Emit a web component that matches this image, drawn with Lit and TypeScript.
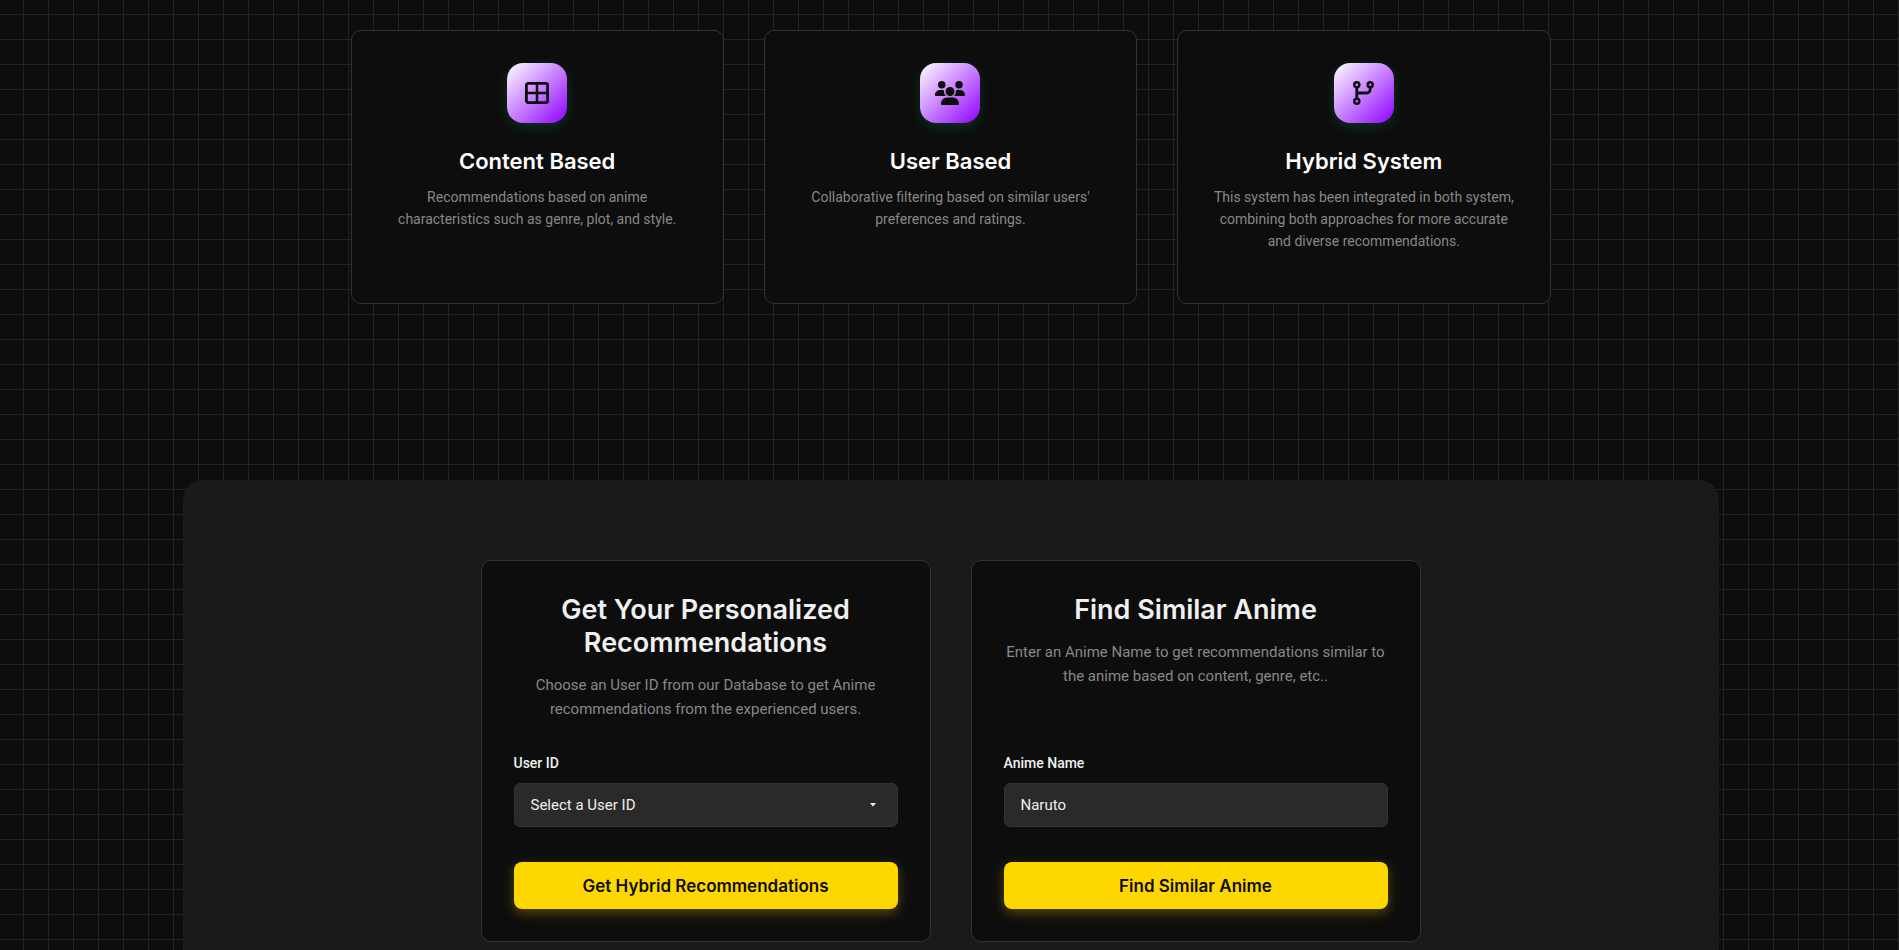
import { LitElement, html, css, svg } from "lit";
import { customElement, property } from "lit/decorators.js";

const icons: Record<string, unknown> = {
  table: svg`<svg width="24" height="22" viewBox="0 0 24 22" fill="none" stroke="currentColor" aria-hidden="true"><rect x="1.400" y="1.400" width="21.200" height="19.200" rx="1.800" stroke-width="2.800"/><path d="M12 1.500v19M1.500 11h21" stroke-width="2.500"/></svg>`,
  users: svg`<svg width="30" height="24" viewBox="0 0 640 512" fill="currentColor" aria-hidden="true"><path d="M144 0a80 80 0 1 1 0 160A80 80 0 1 1 144 0zM512 0a80 80 0 1 1 0 160A80 80 0 1 1 512 0zM0 298.700C0 239.800 47.800 192 106.700 192h42.700c15.900 0 31 3.500 44.600 9.700c-1.300 7.200-1.900 14.700-1.900 22.300c0 38.200 16.800 72.500 43.300 96c-.2 0-.4 0-.7 0H21.300C9.600 320 0 310.400 0 298.700zM405.300 320c-.2 0-.4 0-.7 0c26.600-23.500 43.300-57.800 43.300-96c0-7.600-.7-15-1.900-22.300c13.600-6.300 28.700-9.700 44.600-9.700h42.700C592.200 192 640 239.800 640 298.700c0 11.800-9.600 21.300-21.300 21.300H405.300zM224 224a96 96 0 1 1 192 0 96 96 0 1 1 -192 0zM128 485.300C128 411.700 187.700 352 261.300 352H378.700C452.300 352 512 411.700 512 485.300c0 14.700-11.900 26.700-26.700 26.700H154.700c-14.700 0-26.700-11.900-26.700-26.700z"/></svg>`,
  branch: svg`<svg width="21" height="24" viewBox="0 0 21 24" fill="none" stroke="currentColor" stroke-width="2.500" aria-hidden="true"><circle cx="3.800" cy="3.800" r="2.500"/><circle cx="17.200" cy="3.800" r="2.500"/><circle cx="3.800" cy="20.200" r="2.500"/><path d="M3.800 6v12M17.200 6v2.500a3.500 3.500 0 0 1-3.500 3.500H3.800" stroke-width="2.800"/></svg>`,
};

@customElement("feature-card")
class FeatureCard extends LitElement {
  @property() icon = "table";
  @property() heading = "";
  @property() text = "";

  static styles = css`
    :host {
      box-sizing: border-box;
      display: flex;
      flex-direction: column;
      align-items: center;
      padding: 32px 32px 51px;
      border: 1px solid #333;
      border-radius: 10px;
      background: #0d0d0d;
      text-align: center;
    }
    .badge {
      display: grid;
      place-items: center;
      width: 60px;
      height: 60px;
      border-radius: 16px;
      background: linear-gradient(135deg, #fff, #8f00ff);
      box-shadow: 0 4px 12px rgba(0, 255, 136, 0.15);
      color: #0d0d0d;
    }
    .title {
      margin: 24px 0 11px;
      color: #fff;
      font: 600 22px/28px Inter, sans-serif;
    }
    .text {
      margin: 0;
      color: #888;
      font-size: 14px;
      line-height: 22px;
    }
  `;

  render() {
    return html`
      <div class="badge">${icons[this.icon]}</div>
      <h3 class="title">${this.heading}</h3>
      <p class="text">${this.text}</p>
    `;
  }
}

@customElement("app-root")
class AppRoot extends LitElement {
  static styles = css`
    :host {
      box-sizing: border-box;
      display: block;
      height: 100vh;
      overflow: hidden;
      padding: 30px 0 0 2px;
      background-color: #0d0d0d;
      background-image: linear-gradient(to right, #242424 1px, transparent 1px),
        linear-gradient(to bottom, #242424 1px, transparent 1px);
      background-size: 25px 25px;
      background-position: 23px 14px;
      font-family: Roboto, sans-serif;
    }
    .features {
      display: grid;
      grid-template-columns: repeat(3, 1fr);
      gap: 40px;
      max-width: 1200px;
      margin: 0 auto;
    }
    .panel {
      box-sizing: border-box;
      max-width: 1536px;
      margin: 176px auto 0;
      padding: 80px 40px;
      border-radius: 20px;
      background: #1a1a1a;
    }
    .forms {
      display: grid;
      grid-template-columns: repeat(2, 1fr);
      gap: 40px;
      max-width: 940px;
      margin: 0 auto;
    }
    .form {
      display: flex;
      flex-direction: column;
      padding: 32px;
      border: 1px solid #333;
      border-radius: 10px;
      background: #0d0d0d;
    }
    .title {
      margin: 0 0 14px;
      color: #f0f0f0;
      font: 600 27px/33px Inter, sans-serif;
      text-align: center;
    }
    .text {
      margin: 0 0 32px;
      color: #888;
      font-size: 15px;
      line-height: 24px;
      text-align: center;
    }
    .label {
      margin: auto 0 10px;
      color: #f0f0f0;
      font-size: 14px;
      font-weight: 500;
      line-height: 20px;
    }
    .picker {
      display: grid;
      align-items: center;
    }
    .field,
    .arrow {
      grid-area: 1 / 1;
    }
    .field {
      box-sizing: border-box;
      width: 100%;
      height: 44px;
      margin: 0;
      padding: 0 16px;
      border: 1px solid #333;
      border-radius: 6px;
      outline: none;
      appearance: none;
      background: #2a2a2a;
      color: #f0f0f0;
      font: 15px/20px Roboto, sans-serif;
    }
    .arrow {
      justify-self: end;
      margin-right: 22px;
      color: #f0f0f0;
      pointer-events: none;
    }
    .button {
      height: 47px;
      margin-top: 35px;
      padding: 0 24px;
      border: 0;
      border-radius: 8px;
      background: #ffd700;
      box-shadow: 0 4px 12px rgba(255, 215, 0, 0.3);
      color: #0d0d0d;
      font: 600 17px/24px Inter, sans-serif;
      cursor: pointer;
    }
  `;

  render() {
    return html`
      <section class="features">
        <feature-card icon="table" heading="Content Based"
          text="Recommendations based on anime characteristics such as genre, plot, and style."></feature-card>
        <feature-card icon="users" heading="User Based"
          text="Collaborative filtering based on similar users' preferences and ratings."></feature-card>
        <feature-card icon="branch" heading="Hybrid System"
          text="This system has been integrated in both system, combining both approaches for more accurate and diverse recommendations."></feature-card>
      </section>
      <section class="panel">
        <div class="forms">
          <form class="form" @submit=${(e: Event) => e.preventDefault()}>
            <h2 class="title">Get Your Personalized Recommendations</h2>
            <p class="text">Choose an User ID from our Database to get Anime recommendations from the experienced users.</p>
            <label class="label" for="user-id">User ID</label>
            <div class="picker">
              <select class="field" id="user-id">
                <option>Select a User ID</option>
              </select>
              <svg class="arrow" width="6" height="4" viewBox="0 0 6 4" fill="currentColor" aria-hidden="true"><path d="M0 0h6L3 3.500z"/></svg>
            </div>
            <button class="button">Get Hybrid Recommendations</button>
          </form>
          <form class="form" @submit=${(e: Event) => e.preventDefault()}>
            <h2 class="title">Find Similar Anime</h2>
            <p class="text">Enter an Anime Name to get recommendations similar to the anime based on content, genre, etc..</p>
            <label class="label" for="anime-name">Anime Name</label>
            <input class="field" id="anime-name" type="text" value="Naruto" />
            <button class="button">Find Similar Anime</button>
          </form>
        </div>
      </section>
    `;
  }
}
